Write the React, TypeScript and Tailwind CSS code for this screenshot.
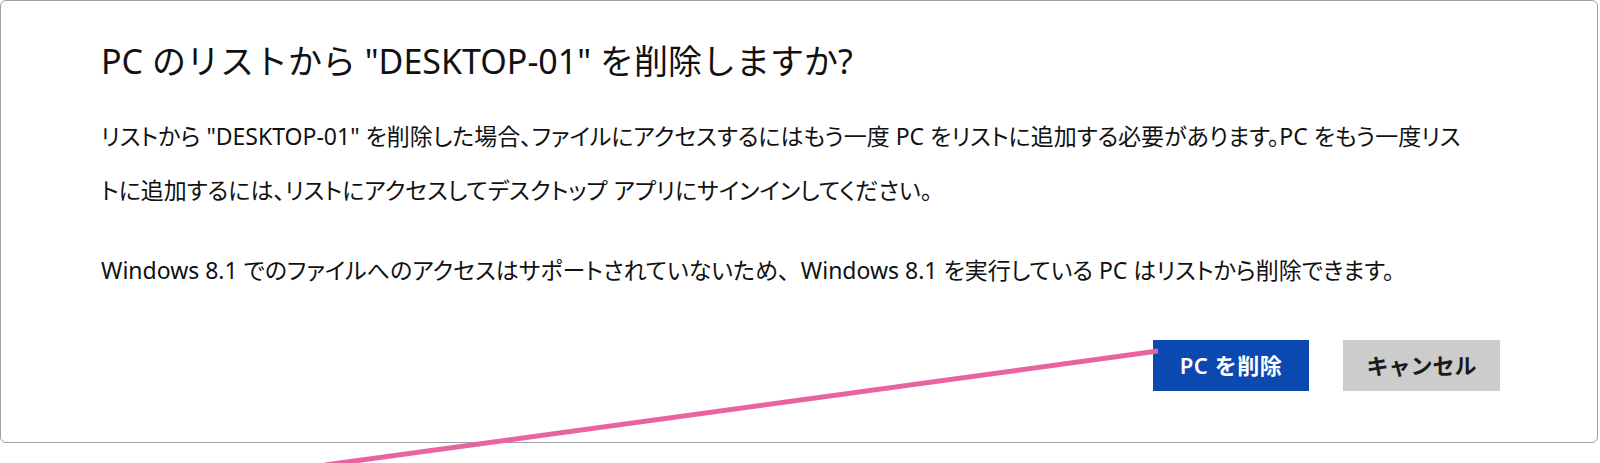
export default function App() {
  return (
    <div className="relative h-[463px] w-[1600px] overflow-hidden bg-white font-['Noto_Sans','Noto_Sans_CJK_JP',sans-serif] text-[#111]">
      <div className="h-[443px] w-[1598px] rounded-md border border-[#a0a0a0] bg-white pl-[100px]">
        <h1 className="mt-[38px] whitespace-nowrap text-[34px] font-normal leading-[44px]">
          PC のリストから "DESKTOP-01" を削除しますか?
        </h1>
        <div className="mt-[26px] text-[23px] leading-[54px] [font-feature-settings:'palt']">
          <p className="whitespace-nowrap">
            リストから "DESKTOP-01" を削除した場合、ファイルにアクセスするにはもう一度 PC をリストに追加する必要があります。PC をもう一度リス
          </p>
          <p className="whitespace-nowrap">トに追加するには、リストにアクセスしてデスクトップ アプリにサインインしてください。</p>
          <p className="mt-[26px] whitespace-nowrap">
            Windows 8.1 でのファイルへのアクセスはサポートされていないため
            <span className="[font-feature-settings:normal]">、</span>
            Windows 8.1 を実行している PC はリストから削除できます。
          </p>
        </div>
        <div className="mt-[43px] flex justify-end gap-[34px] pr-[97px]">
          <button className="flex h-[51px] w-[156px] items-center justify-center bg-[#0b48b0] text-[22px] font-semibold tracking-wide text-white">
            PC を削除
          </button>
          <button className="flex h-[51px] w-[157px] items-center justify-center bg-[#cccccc] text-[22px] font-bold text-[#1a1a1a]">
            キャンセル
          </button>
        </div>
      </div>
      <svg className="pointer-events-none absolute left-0 top-0" width="1600" height="463">
        <line x1="1158" y1="351" x2="325" y2="465" stroke="#e8649e" strokeWidth="5" />
      </svg>
    </div>
  );
}
